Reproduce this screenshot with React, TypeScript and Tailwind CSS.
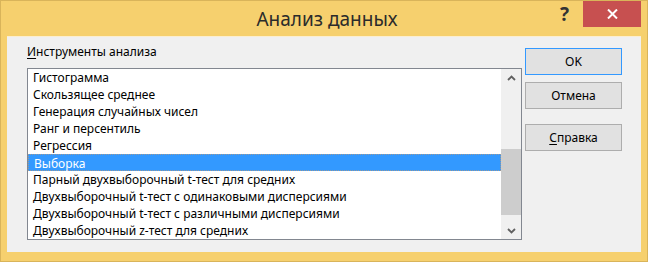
const items = [
	"Гистограмма",
	"Скользящее среднее",
	"Генерация случайных чисел",
	"Ранг и персентиль",
	"Регрессия",
	"Выборка",
	"Парный двухвыборочный t-тест для средних",
	"Двухвыборочный t-тест с одинаковыми дисперсиями",
	"Двухвыборочный t-тест с различными дисперсиями",
	"Двухвыборочный z-тест для средних",
]

const font = "font-['Segoe_UI','Noto_Sans',sans-serif]"

const Chevron = ({ up }: { up?: boolean }) => (
	<svg width="9" height="6" viewBox="0 0 9 6" className="block">
		<path
			d={up ? "M1 5 L4.5 1.5 L8 5" : "M1 1 L4.5 4.5 L8 1"}
			fill="none"
			stroke="#606060"
			strokeWidth="1.8"
		/>
	</svg>
)

const Button = ({ children, primary }: { children: React.ReactNode; primary?: boolean }) => (
	<div
		className={`h-[27px] w-[97px] flex items-center justify-center bg-[#e1e1e1] border text-[12px] text-black ${
			primary ? "border-[#3399ff]" : "border-[#adadad]"
		}`}>
		{children}
	</div>
)

const App = () => {
	const selected = 5

	return (
		<div className={`w-[648px] h-[262px] bg-[#f6d06e] border border-[#d9b45a] flex flex-col ${font}`}>
			{/* title bar */}
			<div className="h-[35px] flex items-start relative">
				<div className="flex-1 text-center text-[19px] leading-[26px] pt-[5px] pl-[6px] text-[#2b2b2b]">
					Анализ данных
				</div>
				<div className="absolute right-[78px] top-[1px] text-[19px] font-bold text-[#333] leading-[24px]">?</div>
				<div className="absolute right-[6px] top-0 w-[58px] h-[26px] bg-[#c75050] flex items-center justify-center">
					<svg width="11" height="10" viewBox="0 0 11 10">
						<path d="M1 0.5 L10 9.5 M10 0.5 L1 9.5" stroke="#fff" strokeWidth="2" />
					</svg>
				</div>
			</div>

			{/* client area */}
			<div className="mx-[6px] h-[216px] bg-[#f0f0f0] border-t border-[#fbeed0] flex pl-[20px]">
				<div className="flex flex-col w-[495px]">
					<div className="text-[12px] leading-[16px] mt-[7px] text-black">
						<span className="underline underline-offset-2">И</span>нструменты анализа
					</div>
					<div className="mt-[8px] h-[172px] border border-[#828790] bg-white flex">
						<div className="flex-1 flex flex-col">
							{items.map((item, i) => (
								<div
									key={item}
									className={`h-[17px] leading-[17px] pl-[5px] text-[12px] whitespace-nowrap ${
										i === selected
											? "bg-[#3399ff] text-white border border-dotted border-[#c99a6a]/70 pl-[4px] leading-[15px]"
											: "text-black"
									}`}>
									{item}
								</div>
							))}
						</div>
						<div className="w-[20px] bg-[#f0f0f0] flex flex-col">
							<div className="h-[17px] flex items-center justify-center">
								<Chevron up />
							</div>
							<div className="flex-1 flex flex-col">
								<div className="h-[63px]" />
								<div className="h-[66px] bg-[#cdcdcd]" />
							</div>
							<div className="h-[17px] flex items-center justify-center">
								<Chevron />
							</div>
						</div>
					</div>
				</div>

				<div className="flex flex-col ml-[3px] pt-[11px]">
					<Button primary>OK</Button>
					<div className="h-[7px]" />
					<Button>Отмена</Button>
					<div className="h-[15px]" />
					<Button>
						<span>
							<span className="underline underline-offset-2">С</span>правка
						</span>
					</Button>
				</div>
			</div>
		</div>
	)
}

export default App
